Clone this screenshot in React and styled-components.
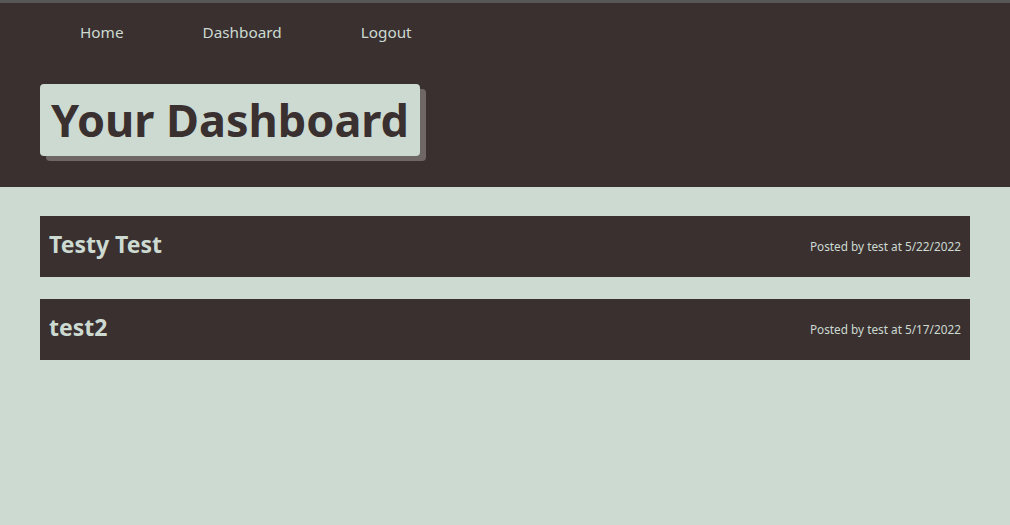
import React from "react";
import styled, { createGlobalStyle } from "styled-components";

const Global = createGlobalStyle`
  html, body { margin: 0; padding: 0; }
  body {
    background: #ccdad1;
    font-family: "Noto Sans", "Open Sans", sans-serif;
    min-height: 525px;
  }
`;

const Header = styled.header`
  background: #3a3030;
  border-top: 3px solid #575757;
  padding: 0 40px 31px;
`;

const Nav = styled.nav`
  display: flex;
  padding: 18px 0 0 40px;
  gap: 79px;
  height: 31px;
`;

const NavLink = styled.a`
  color: #ccdad1;
  font-size: 15.3px;
  line-height: 22px;
  text-decoration: none;
`;

const TitleWrap = styled.div`
  margin-top: 32px;
  display: flex;
`;

const Title = styled.h1`
  margin: 0;
  background: #ccdad1;
  color: #3a3030;
  font-size: 45px;
  font-weight: 700;
  line-height: 72px;
  height: 72px;
  padding: 0 11px;
  border-radius: 4px;
  box-shadow: 6px 5px 0 #6f6766;
`;

const Main = styled.main`
  padding: 29px 40px;
  display: flex;
  flex-direction: column;
  gap: 22px;
`;

const Card = styled.article`
  background: #3a3030;
  height: 61px;
  display: flex;
  align-items: center;
  justify-content: space-between;
  padding: 0 9px;
`;

const CardTitle = styled.h2`
  margin: -6px 0 0;
  color: #ccdad1;
  font-size: 23px;
  font-weight: 700;
`;

const Meta = styled.span`
  color: #ccdad1;
  font-size: 11.8px;
  margin-top: -1px;
`;

const posts = [
  { title: "Testy Test", author: "test", date: "5/22/2022" },
  { title: "test2", author: "test", date: "5/17/2022" },
];

export default function App() {
  return (
    <>
      <Global />
      <Header>
        <Nav>
          <NavLink href="#">Home</NavLink>
          <NavLink href="#">Dashboard</NavLink>
          <NavLink href="#">Logout</NavLink>
        </Nav>
        <TitleWrap>
          <Title>Your Dashboard</Title>
        </TitleWrap>
      </Header>
      <Main>
        {posts.map((p) => (
          <Card key={p.title}>
            <CardTitle>{p.title}</CardTitle>
            <Meta>
              Posted by {p.author} at {p.date}
            </Meta>
          </Card>
        ))}
      </Main>
    </>
  );
}
